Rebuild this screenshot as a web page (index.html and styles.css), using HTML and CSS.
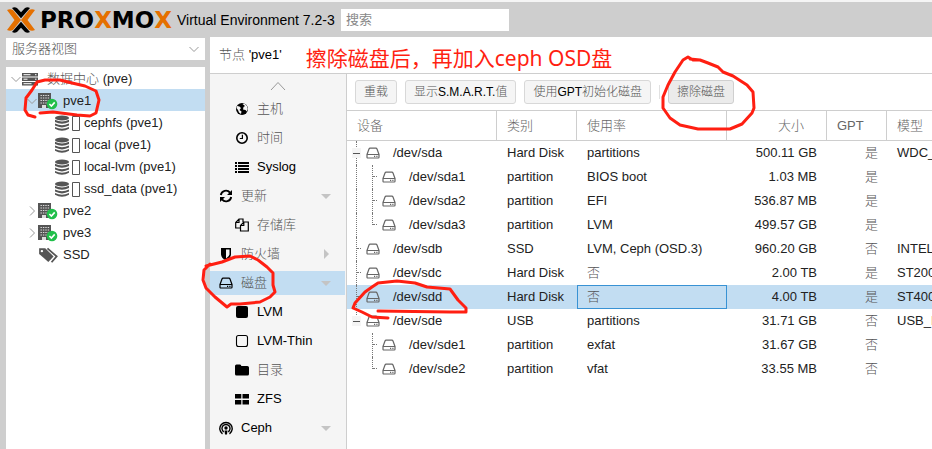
FILE: index.html
```html
<!DOCTYPE html>
<html lang="zh-CN">
<head>
    <meta charset="utf-8">
    <meta name="viewport" content="width=device-width, initial-scale=1.0">
    <title>pve1 - Proxmox Virtual Environment</title>
    <link rel="stylesheet" href="styles.css">
</head>
<body>
    <svg class="defs" aria-hidden="true">
        <symbol id="i-hdd" viewBox="0 0 14 14"><path d="M1 8.500 3 3q.3-.8 1.200-.8h5.600q.9 0 1.200.8l2 5.500M1 8.500h12v2.700q0 .8-.8.8H1.800q-.8 0-.8-.8z" fill="none" stroke="currentColor" stroke-width="1.200"/><path d="M8 9.700h1.200v1.200H8zM10.300 9.700h1.200v1.200h-1.200z" fill="currentColor"/></symbol>
        <symbol id="i-server" viewBox="0 0 16 16"><path d="M0 2h16v3.500H0zM0 6.500h16V10H0zM0 11h16v3.500H0z" fill="#555"/><path d="M1.500 3.700h7M1.500 8.200h4M1.500 12.700h8M13 3.700h1.500M13 8.200h1.500M13 12.700h1.500" stroke="#fff"/></symbol>
        <symbol id="i-node" viewBox="0 0 20 18"><path d="M0 1h13v15H0z" fill="#555"/><path d="M2.500 3.500h9M2.500 6h9M2.500 8.500h9M2.500 11h9" stroke="#ddd" stroke-width="1.200" stroke-dasharray="1.400 1"/><path d="M4 13h4v3H4z" fill="#ddd"/><circle cx="14" cy="12" r="5.300" fill="#21bf4b"/><path d="m11.400 12 2 2 3.300-3.600" fill="none" stroke="#fff" stroke-width="1.600"/></symbol>
        <symbol id="i-storage" viewBox="0 0 22 16"><g fill="#555"><ellipse cx="7" cy="3" rx="7" ry="2.500"/><path d="M0 4.700q7 3.500 14 0v2.200q-7 3.600-14 0zM0 8.400q7 3.500 14 0v2.200q-7 3.600-14 0zM0 12.100q7 3.500 14 0v1.700q-7 3.800-14 0z"/></g><path d="M17.500 1.500h7v14h-7z" fill="#fff" stroke="#555"/></symbol>
        <symbol id="i-tags" viewBox="0 0 18 16"><path d="M1 2h5.500l7.500 7.300-4.700 5L1 7z" fill="#555"/><path d="m8.500 2 8.300 7.300-4.600 5.200" fill="none" stroke="#555" stroke-width="1.600"/><circle cx="3.500" cy="4.500" r="1.100" fill="#fff"/></symbol>
        <symbol id="i-globe" viewBox="0 0 14 14"><circle cx="7" cy="7" r="6"/><path d="m7.500 2 2-.5L12 4l.8 3-1 2.500L10.500 8 8 7.500 8.500 5 10 4zM2 4l2.500.5L6 6 4.500 8l2 1.500L6 12 4 10.500 3 8 1.500 6z" fill="#f5f5f5"/></symbol>
        <symbol id="i-clock" viewBox="0 0 14 14"><circle cx="7" cy="7" r="5.200" fill="none" stroke="#000" stroke-width="1.600"/><path d="M7.400 3.800v3.700H4.800" fill="none" stroke="#000" stroke-width="1.200"/></symbol>
        <symbol id="i-list" viewBox="0 0 14 14"><path d="M0 2h2v2H0zM3 2h11v2H3zM0 5h2v2H0zM3 5h11v2H3zM0 8h2v2H0zM3 8h11v2H3zM0 11h2v2H0zM3 11h11v2H3z"/></symbol>
        <symbol id="i-refresh" viewBox="0 0 14 14"><path d="M1.800 6A5.200 5.200 0 0 1 11 3.600M12.200 8A5.200 5.200 0 0 1 3 10.400" fill="none" stroke="#000" stroke-width="1.900"/><path d="M13 1v5H8zM1 13V8h5z"/></symbol>
        <symbol id="i-copy" viewBox="0 0 14 14"><path d="M5 10H.7V4.500L4 1h4v3M4 1v3.500H.7M5.500 13V7.500L8.800 4h4.500v9zM8.800 4v3.500H5.500" fill="none" stroke="#000" stroke-width="1.200"/></symbol>
        <symbol id="i-shield" viewBox="0 0 14 14"><path d="M2 1h10v6q0 4-5 6.500Q2 11 2 7z"/><path d="M7 2.600h3.500V7q0 2.500-3.500 4.600z" fill="#f5f5f5"/></symbol>
        <symbol id="i-square" viewBox="0 0 14 14"><rect x="1" y="1" width="12" height="12" rx="2"/></symbol>
        <symbol id="i-square-o" viewBox="0 0 14 14"><rect x="1.500" y="1.500" width="11" height="11" rx="2" fill="none" stroke="#000" stroke-width="1.100"/></symbol>
        <symbol id="i-folder" viewBox="0 0 14 14"><path d="M0 3q0-1.500 1.500-1.500H5Q6.300 1.500 6.300 3h6Q14 3 14 4.500V11q0 1.500-1.500 1.500h-11Q0 12.500 0 11z"/></symbol>
        <symbol id="i-grid" viewBox="0 0 14 14"><path d="M0 2h6.300v4.600H0zM7.500 2H14v4.600H7.500zM0 7.900h6.300v4.600H0zM7.500 7.900H14v4.600H7.500z"/></symbol>
        <symbol id="i-ceph" viewBox="0 0 14 14"><path d="M3.500 12.800A6.200 6.200 0 1 1 10.500 12.800M4.800 10.800A4 4 0 1 1 9.200 10.800" fill="none" stroke="#000" stroke-width="1.400"/><circle cx="7" cy="7" r="1.700"/><path d="M5.500 9.500h3L8 13.500H6z"/></symbol>
        <symbol id="i-down" viewBox="0 0 10 10"><path d="m.5 3 4.500 4.500L9.500 3" fill="none" stroke="#999"/></symbol>
        <symbol id="i-right" viewBox="0 0 10 10"><path d="M3 .5 7.500 5 3 9.500" fill="none" stroke="#999"/></symbol>
    </svg>

    <header>
        <div class="logo">
            <svg width="28" height="26" viewBox="0 0 28 26">
                <path d="M0 3q3-1.500 6 0l8 10-8 10q-3 1.500-6 0l7.500-10zM28 3q-3-1.500-6 0l-8 10 8 10q3 1.500 6 0l-7.500-10z" fill="#e57000"/>
                <path d="M5 1q2.500-1.500 5 0l4 4.300L18 1q2.500-1.500 5 0l-9 10.300zM5 25q2.500 1.500 5 0l4-4.300 4 4.300q2.500 1.500 5 0l-9-10.300z"/>
            </svg>
            <span class="wordmark">PRO<b>X</b>MO<b>X</b></span>
        </div>
        <span class="version">Virtual Environment 7.2-3</span>
        <input type="search" class="search" placeholder="搜索" aria-label="搜索">
    </header>

    <div class="workspace">
        <aside>
            <div class="viewSelect">
                <select aria-label="视图">
                    <option>服务器视图</option>
                </select>
                <svg class="arrow"><use href="#i-down"/></svg>
            </div>
            <ul class="tree">
                <li><svg class="arrow"><use href="#i-down"/></svg><svg class="wide"><use href="#i-server"/></svg><span><span class="cjk">数据中心</span> (pve)</span></li>
                <li class="node selected"><svg class="arrow"><use href="#i-down"/></svg><svg class="wide"><use href="#i-node"/></svg>pve1</li>
                <li class="storage"><svg class="wide"><use href="#i-storage"/></svg>cephfs (pve1)</li>
                <li class="storage"><svg class="wide"><use href="#i-storage"/></svg>local (pve1)</li>
                <li class="storage"><svg class="wide"><use href="#i-storage"/></svg>local-lvm (pve1)</li>
                <li class="storage"><svg class="wide"><use href="#i-storage"/></svg>ssd_data (pve1)</li>
                <li class="node"><svg class="arrow"><use href="#i-right"/></svg><svg class="wide"><use href="#i-node"/></svg>pve2</li>
                <li class="node"><svg class="arrow"><use href="#i-right"/></svg><svg class="wide"><use href="#i-node"/></svg>pve3</li>
                <li class="node"><svg class="arrow"></svg><svg class="wide"><use href="#i-tags"/></svg>SSD</li>
            </ul>
        </aside>

        <main>
            <div class="title">
                <span><span class="cjk">节点</span> 'pve1'</span>
                <span class="note">擦除磁盘后，再加入ceph OSD盘</span>
            </div>
            <div class="content">
                <nav>
                    <svg class="scroller" viewBox="0 0 16 10"><path d="m1 9 7-7.500L15 9" fill="none" stroke="#999"/></svg>
                    <a href="#host" class="sub cjk"><svg><use href="#i-globe"/></svg>主机</a>
                    <a href="#time" class="sub cjk"><svg><use href="#i-clock"/></svg>时间</a>
                    <a href="#syslog" class="sub"><svg><use href="#i-list"/></svg>Syslog</a>
                    <a href="#updates" class="cjk open"><svg><use href="#i-refresh"/></svg>更新</a>
                    <a href="#repos" class="sub cjk"><svg><use href="#i-copy"/></svg>存储库</a>
                    <a href="#firewall" class="cjk closed"><svg><use href="#i-shield"/></svg>防火墙</a>
                    <a href="#disks" class="cjk open selected"><svg class="dark"><use href="#i-hdd"/></svg>磁盘</a>
                    <a href="#lvm" class="sub"><svg><use href="#i-square"/></svg>LVM</a>
                    <a href="#lvmthin" class="sub"><svg><use href="#i-square-o"/></svg>LVM-Thin</a>
                    <a href="#directory" class="sub cjk"><svg><use href="#i-folder"/></svg>目录</a>
                    <a href="#zfs" class="sub"><svg><use href="#i-grid"/></svg>ZFS</a>
                    <a href="#ceph" class="open"><svg><use href="#i-ceph"/></svg>Ceph</a>
                </nav>

                <section>
                    <div class="toolbar">
                        <button type="button"><span class="cjk">重载</span></button>
                        <button type="button"><span class="cjk">显示</span>S.M.A.R.T.<span class="cjk">值</span></button>
                        <button type="button"><span class="cjk">使用</span>GPT<span class="cjk">初始化磁盘</span></button>
                        <i class="separator"></i>
                        <button type="button" class="pressed"><span class="cjk">擦除磁盘</span></button>
                    </div>
                    <table>
                        <colgroup>
                            <col class="device"><col class="type"><col class="usage"><col class="size"><col class="gpt"><col>
                        </colgroup>
                        <thead>
                            <tr><th>设备</th><th>类别</th><th>使用率</th><th class="num">大小</th><th>GPT</th><th>模型</th></tr>
                        </thead>
                        <tbody>
                            <tr><td><div class="dev"><i class="minus"></i><svg><use href="#i-hdd"/></svg>/dev/sda</div></td><td>Hard Disk</td><td>partitions</td><td class="num">500.11 GB</td><td class="flag">是</td><td>WDC_</td></tr>
                            <tr><td><div class="dev"><i class="line"></i><i class="tee"></i><svg><use href="#i-hdd"/></svg>/dev/sda1</div></td><td>partition</td><td>BIOS boot</td><td class="num">1.03 MB</td><td class="flag">是</td><td></td></tr>
                            <tr><td><div class="dev"><i class="line"></i><i class="tee"></i><svg><use href="#i-hdd"/></svg>/dev/sda2</div></td><td>partition</td><td>EFI</td><td class="num">536.87 MB</td><td class="flag">是</td><td></td></tr>
                            <tr><td><div class="dev"><i class="line"></i><i class="end"></i><svg><use href="#i-hdd"/></svg>/dev/sda3</div></td><td>partition</td><td>LVM</td><td class="num">499.57 GB</td><td class="flag">是</td><td></td></tr>
                            <tr><td><div class="dev"><i class="tee"></i><svg><use href="#i-hdd"/></svg>/dev/sdb</div></td><td>SSD</td><td>LVM, Ceph (OSD.3)</td><td class="num">960.20 GB</td><td class="flag">否</td><td>INTEL</td></tr>
                            <tr><td><div class="dev"><i class="tee"></i><svg><use href="#i-hdd"/></svg>/dev/sdc</div></td><td>Hard Disk</td><td class="cjk">否</td><td class="num">2.00 TB</td><td class="flag">是</td><td>ST200</td></tr>
                            <tr class="selected"><td><div class="dev"><i class="tee"></i><svg><use href="#i-hdd"/></svg>/dev/sdd</div></td><td>Hard Disk</td><td class="cjk focused">否</td><td class="num">4.00 TB</td><td class="flag">是</td><td>ST400</td></tr>
                            <tr><td><div class="dev"><i class="minus last"></i><svg><use href="#i-hdd"/></svg>/dev/sde</div></td><td>USB</td><td>partitions</td><td class="num">31.71 GB</td><td class="flag">否</td><td>USB_D</td></tr>
                            <tr><td><div class="dev"><i></i><i class="tee"></i><svg><use href="#i-hdd"/></svg>/dev/sde1</div></td><td>partition</td><td>exfat</td><td class="num">31.67 GB</td><td class="flag">否</td><td></td></tr>
                            <tr><td><div class="dev"><i></i><i class="end"></i><svg><use href="#i-hdd"/></svg>/dev/sde2</div></td><td>partition</td><td>vfat</td><td class="num">33.55 MB</td><td class="flag">否</td><td></td></tr>
                        </tbody>
                    </table>
                </section>
            </div>
        </main>
    </div>

    <!-- hand-drawn marks over the page -->
    <svg class="marks" aria-hidden="true">
        <path d="M35 117 28 115 25 110 26 98 32 90 37 82 45 80 60 80 72 83 85 86 96 91 99 100 96 113 90 116 77 115 53 112 40 113"/>
        <path d="M206 266 222 262 235 257 250 256 258 260 267 267 273 273 273 285 275 292 270 297 260 302 240 304 231 304 227 307 215 297 206 288 203 280 204 270 210 264"/>
        <path d="M700 60 693 60 688 57 683 60 675 72 668 85 663 97 663 108 670 118 680 125 698 129 730 129 742 124 752 113 754 108 753 92 747 85 733 76 723 72 718 67 708 63 700 60 690 59"/>
        <path d="M388 318 372 317 362 312 353 308 355 303 365 292 372 287 378 283 397 281 415 283 427 287 450 289 458 300 466 308 466 312 450 312 378 311"/>
    </svg>
</body>
</html>
```
FILE: styles.css
```css
* {
    box-sizing: border-box;
}
body {
    margin: 0;
    height: 100vh;
    display: flex;
    flex-direction: column;
    overflow: hidden;
    border-top: 2px solid #f5f5f5;
    background-color: #cecece;
    color: #000;
    font: 13px/22px "Liberation Sans", "Noto Sans CJK SC", sans-serif;
}
svg {
    flex: none;
    width: 14px;
    height: 14px;
}
.defs {
    position: absolute;
    width: 0;
    height: 0;
}
.cjk {
    color: #555;
    font-weight: 300;
}
header {
    display: flex;
    align-items: center;
    height: 35px;
    padding-left: 7px;
}
.logo {
    display: flex;
    align-items: center;
    gap: 5px;
    width: 170px;
}
.logo svg {
    width: 28px;
    height: 26px;
}
.wordmark {
    font: bold 23px/26px "DejaVu Sans", sans-serif;
}
.wordmark b {
    color: #e57000;
}
.version {
    font-size: 14px;
    width: 164px;
    white-space: nowrap;
}
.search {
    width: 168px;
    height: 22px;
    padding: 0 5px;
    border: none;
    border-radius: 0;
    background-color: #fff;
    font: inherit;
}
.search::placeholder {
    color: #888;
}
.workspace {
    flex: 1;
    display: flex;
    gap: 5px;
    min-height: 0;
    padding-left: 6px;
}
aside {
    flex: none;
    width: 199px;
    display: flex;
    flex-direction: column;
    gap: 7px;
    padding-top: 1px;
}
.viewSelect {
    position: relative;
}
.viewSelect select {
    display: block;
    width: 100%;
    height: 22px;
    padding: 0 6px;
    border: none;
    border-radius: 0;
    appearance: none;
    background-color: #fff;
    color: #555;
    font: inherit;
    font-weight: 300;
}
.viewSelect .arrow {
    position: absolute;
    right: 6px;
    top: 6px;
}
.arrow {
    width: 10px;
    height: 10px;
}
.tree {
    flex: 1;
    margin: 0;
    padding: 0;
    background-color: #fff;
    list-style: none;
    color: #222;
}
.tree li {
    display: flex;
    align-items: center;
    height: 22px;
    padding: 2px 0 0 5px;
}
.tree .wide {
    width: 20px;
    height: 18px;
    margin: 0 5px 0 1px;
}
.tree li:first-child .wide {
    width: 16px;
    margin-right: 9px;
}
.tree .node {
    padding-left: 21px;
}
.tree .storage {
    padding-left: 48px;
}
.tree .storage .wide {
    width: 22px;
    height: 16px;
    margin-right: 7px;
    overflow: visible;
}
#i-storage {
    overflow: visible;
}
.tree .selected, nav .selected, tr.selected {
    background-color: #c2ddf2;
}
main {
    flex: 1;
    min-width: 0;
    display: flex;
    flex-direction: column;
    background-color: #fff;
}
.title {
    flex: none;
    display: flex;
    align-items: center;
    gap: 24px;
    height: 37px;
    padding-left: 9px;
    border-bottom: 1px solid #cecece;
}
.note {
    padding-top: 6px;
    color: #ff1f12;
    font: 21px/24px "Noto Sans", "Noto Sans CJK SC", sans-serif;
    white-space: nowrap;
}
.content {
    flex: 1;
    display: flex;
    min-height: 0;
}
nav {
    flex: none;
    width: 137px;
    display: flex;
    flex-direction: column;
    gap: 5px;
    padding-right: 1px;
    border-right: 1px solid #cecece;
    background-color: #f5f5f5;
    overflow: hidden;
}
nav .scroller {
    width: 16px;
    height: 10px;
    margin: 7px 0 1px 60px;
}
nav a {
    flex: none;
    display: flex;
    align-items: center;
    gap: 8px;
    height: 24px;
    padding: 0 14px 0 9px;
    color: #000;
    text-decoration: none;
}
nav a.cjk {
    color: #555;
}
nav a.sub {
    padding-left: 25px;
}
nav a svg {
    color: #000;
}
nav .open::after, nav .closed::after {
    content: "";
    margin-left: auto;
    border: 5px solid transparent;
    border-top-color: #c4c4c4;
    border-bottom-width: 0;
}
nav .closed::after {
    margin-right: 2px;
    border: 5px solid transparent;
    border-left-color: #c4c4c4;
    border-right-width: 0;
}
section {
    flex: 1;
    min-width: 0;
    overflow: hidden;
}
.toolbar {
    display: flex;
    align-items: center;
    gap: 8px;
    height: 36px;
    padding-left: 8px;
}
.toolbar button {
    height: 24px;
    padding: 0 8px;
    border: 1px solid #d8d8d8;
    border-radius: 3px;
    background-color: #f5f5f5;
    color: #000;
    font: 12px/22px "Liberation Sans", "Noto Sans CJK SC", sans-serif;
    white-space: nowrap;
}
.toolbar .pressed {
    border-color: #cfcfcf;
    background-color: #ebebeb;
}
.separator {
    width: 1px;
    height: 14px;
    background-color: #e1e1e1;
}
table {
    width: 100%;
    table-layout: fixed;
    border-collapse: separate;
    border-spacing: 0;
    color: #222;
}
.device {
    width: 150px;
}
.type {
    width: 80px;
}
.usage {
    width: 150px;
}
.size {
    width: 100px;
}
.gpt {
    width: 60px;
}
th {
    height: 31px;
    padding: 0 10px;
    border: solid #cecece;
    border-width: 1px 1px 1px 0;
    color: #666;
    font-weight: 300;
    text-align: left;
    white-space: nowrap;
}
th.num {
    padding-right: 22px;
}
th:last-child {
    border-right: none;
}
td {
    height: 24px;
    padding: 0 10px;
    overflow: hidden;
    white-space: nowrap;
    line-height: 22px;
}
td:first-child {
    padding: 0 0 0 1px;
}
th:last-child, td:last-child {
    padding-right: 0;
}
.num {
    text-align: right;
}
.flag {
    padding-right: 9px;
    color: #555;
    font-weight: 300;
    text-align: right;
}
.focused {
    outline: 1px solid #3892d4;
    outline-offset: -1px;
}
.dev {
    display: flex;
    align-items: center;
    height: 24px;
}
.dev svg {
    margin: 0 13px 0 2px;
    color: #666;
}
.dev i {
    position: relative;
    width: 16px;
    height: 24px;
}
/* dotted branch lines of the device tree */
.line::before, .tee::before, .end::before, .minus::before {
    content: "";
    position: absolute;
    left: 8px;
    top: 0;
    height: 24px;
    border-left: 1px dotted #777;
}
.end::before, .last::before {
    height: 12px;
}
.tee::after, .end::after {
    content: "";
    position: absolute;
    left: 9px;
    top: 11px;
    width: 4px;
    border-top: 1px dotted #777;
}
.minus::after {
    content: "";
    position: absolute;
    left: 4px;
    top: 7px;
    width: 9px;
    height: 10px;
    background: linear-gradient(#555, #555) center / 7px 1px no-repeat #f5f5f5;
}
.marks {
    position: absolute;
    left: 0;
    top: 0;
    overflow: visible;
    pointer-events: none;
    fill: none;
    stroke: #ff1f12;
    stroke-width: 3;
    stroke-linecap: round;
    stroke-linejoin: round;
}
```
